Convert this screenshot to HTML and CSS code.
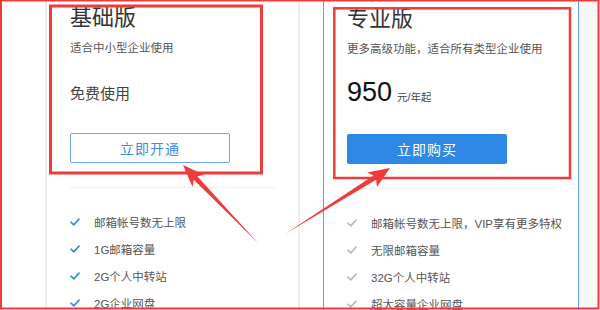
FILE: index.html
```html
<!DOCTYPE html>
<html lang="zh-CN">

<head>
    <meta charset="UTF-8">
    <meta name="viewport" content="width=device-width, initial-scale=1.0">
    <title>版本对比</title>
    <link rel="stylesheet" href="styles.css">
</head>

<body>
    <div class="shot">
        <div class="plans">
            <div class="plan plan-basic">
                <h2 class="plan-name">基础版</h2>
                <p class="plan-desc">适合中小型企业使用</p>
                <div class="plan-price"><span class="free">免费使用</span></div>
                <button class="btn btn-outline">立即开通</button>
                <div class="divider"></div>
                <ul class="features">
                    <li><svg class="tick" viewBox="0 0 10 8"><path d="M1 4.2 L3.8 6.8 L9 1.2" /></svg>邮箱帐号数无上限</li>
                    <li><svg class="tick" viewBox="0 0 10 8"><path d="M1 4.2 L3.8 6.8 L9 1.2" /></svg>1G邮箱容量</li>
                    <li><svg class="tick" viewBox="0 0 10 8"><path d="M1 4.2 L3.8 6.8 L9 1.2" /></svg>2G个人中转站</li>
                    <li><svg class="tick" viewBox="0 0 10 8"><path d="M1 4.2 L3.8 6.8 L9 1.2" /></svg>2G企业网盘</li>
                </ul>
            </div>

            <div class="plan plan-pro">
                <h2 class="plan-name">专业版</h2>
                <p class="plan-desc">更多高级功能，适合所有类型企业使用</p>
                <div class="plan-price"><span class="amount">950</span><span class="unit">元/年起</span></div>
                <button class="btn btn-solid">立即购买</button>
                <div class="divider"></div>
                <ul class="features">
                    <li><svg class="tick" viewBox="0 0 10 8"><path d="M1 4.2 L3.8 6.8 L9 1.2" /></svg>邮箱帐号数无上限，VIP享有更多特权</li>
                    <li><svg class="tick" viewBox="0 0 10 8"><path d="M1 4.2 L3.8 6.8 L9 1.2" /></svg>无限邮箱容量</li>
                    <li><svg class="tick" viewBox="0 0 10 8"><path d="M1 4.2 L3.8 6.8 L9 1.2" /></svg>32G个人中转站</li>
                    <li><svg class="tick" viewBox="0 0 10 8"><path d="M1 4.2 L3.8 6.8 L9 1.2" /></svg>超大容量企业网盘</li>
                </ul>
            </div>
        </div>

        <!-- annotation marks drawn over the screenshot -->
        <svg class="marks" viewBox="0 0 600 310">
            <rect x="1" y="0.5" width="597.5" height="308" fill="none" stroke="#f03b3b" stroke-width="2" />
            <rect x="50.5" y="6" width="211" height="167" fill="none" stroke="#f03b3b" stroke-width="3" />
            <rect x="334.3" y="8.3" width="235.7" height="169.7" fill="none" stroke="#f03b3b" stroke-width="2.5" />
            <polygon points="183,165 204.5,175 197.3,176.3 258,243 193.7,179.7 192.5,187" fill="#f03b3b" />
            <polygon points="390,168 367,172.5 373.5,175.5 285,234 376.1,179.7 377,187" fill="#f03b3b" />
        </svg>
    </div>
</body>

</html>
```

FILE: styles.css
```css
* {
    box-sizing: border-box;
}

body {
    margin: 0;
    background: #fff;
    font-family: "Liberation Sans", "Noto Sans CJK SC", sans-serif;
}

.shot {
    position: relative;
    width: 600px;
    height: 310px;
    overflow: hidden;
    background: #fff;
}

.plans {
    display: flex;
    gap: 23px;
    padding-left: 45px;
    height: 100%;
}

.plan {
    height: 340px;
    padding: 3px 23px 0;
    background: #fff;
}

.plan-basic {
    width: 255px;
    border-left: 2px solid #ededed;
    border-right: 2px solid #ededed;
}

.plan-pro {
    width: 256px;
    border: 1px solid #5d9ef0;
    box-shadow: 22px 0 0 #f7f7f8;
}

.plan-name {
    margin: 0;
    font-size: 22px;
    font-weight: normal;
    line-height: 30px;
    color: #333;
}

.plan-desc {
    margin: 5px 0 0;
    font-size: 11.5px;
    line-height: 20px;
    color: #555;
    white-space: nowrap;
}

.plan-price {
    display: flex;
    align-items: baseline;
    height: 36px;
    margin-top: 15px;
}

.free {
    padding-top: 3px;
    font-size: 15px;
    line-height: 36px;
    color: #444;
}

.amount {
    font-size: 27px;
    line-height: 36px;
    color: #111;
}

.unit {
    margin-left: 5px;
    font-size: 10.5px;
    color: #444;
}

.btn {
    display: block;
    width: 160px;
    height: 30px;
    margin-top: 24px;
    padding: 0;
    border-radius: 2px;
    font-family: inherit;
    font-size: 14px;
    letter-spacing: 1px;
}

.btn-outline {
    border: 1px solid #6fa8ec;
    background: #fff;
    color: #3a8ee6;
}

.btn-solid {
    border: none;
    background: #2d88e6;
    color: #fff;
}

.divider {
    height: 1px;
    margin-top: 24px;
    background: #ededed;
}

.features {
    list-style: none;
    margin: 0;
    padding: 20px 0 0;
}

.features li {
    display: flex;
    align-items: center;
    height: 27px;
    font-size: 11.5px;
    color: #555;
    white-space: nowrap;
}

.tick {
    width: 10px;
    height: 8px;
    margin-right: 14px;
    flex-shrink: 0;
}

.tick path {
    fill: none;
    stroke-width: 1.7;
    stroke-linecap: round;
    stroke-linejoin: round;
}

.plan-basic .tick path {
    stroke: #3a8ee6;
}

.plan-pro .tick path {
    stroke: #b4bcc6;
}

.marks {
    position: absolute;
    top: 0;
    left: 0;
    width: 600px;
    height: 310px;
    pointer-events: none;
}
```
